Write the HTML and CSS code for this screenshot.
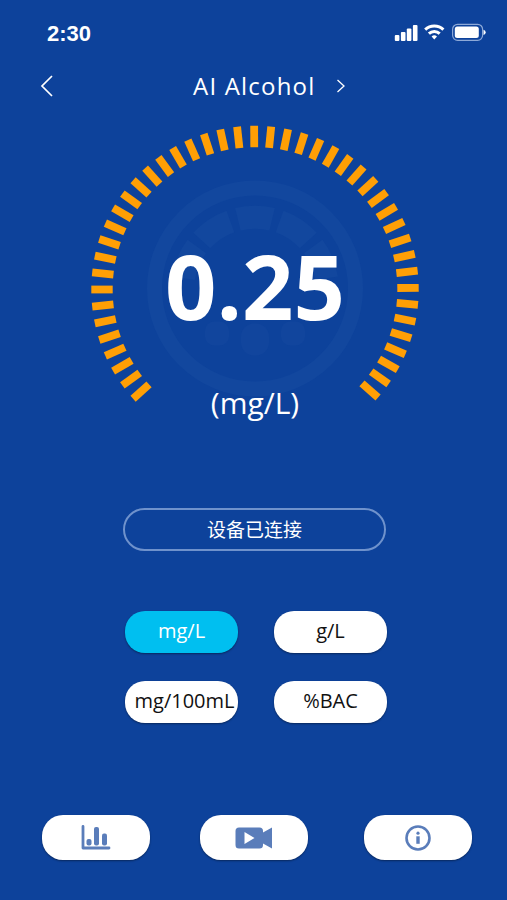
FILE: index.html
```
<!DOCTYPE html>
<html lang="zh-CN">
<head>
    <meta charset="UTF-8">
    <meta name="viewport" content="width=device-width, initial-scale=1.0">
    <title>AI Alcohol</title>
    <link rel="stylesheet" href="styles.css">
</head>
<body>
    <div class="app">
        <div class="status-bar">
            <span class="time">2:30</span>
            <svg class="status-icons" width="92" height="20" viewBox="0 0 92 20">
                <g fill="#fff">
                    <rect x="0.8" y="12" width="4.6" height="6" rx="1"/>
                    <rect x="6.9" y="9" width="4.6" height="9" rx="1"/>
                    <rect x="12.8" y="5.5" width="4.6" height="12.5" rx="1"/>
                    <rect x="18.9" y="2" width="4.6" height="16" rx="1"/>
                </g>
                <g fill="none" stroke="#fff" stroke-width="3">
                    <path d="M31.2 6.6a13 13 0 0 1 18.2 0"/>
                    <path d="M34.9 10.7a7.8 7.8 0 0 1 10.8 0"/>
                </g>
                <path d="M37.6 13.6a4 4 0 0 1 5.4 0l-2.7 3z" fill="#fff"/>
                <rect x="58.6" y="1.3" width="30" height="16" rx="5" fill="none" stroke="#8da9d8" stroke-width="1.2"/>
                <rect x="60.8" y="3.5" width="24" height="11.6" rx="2.5" fill="#fff"/>
                <path d="M89.5 6.8q2.2 .8 2.2 2.6t-2.2 2.6z" fill="#fff"/>
            </svg>
        </div>

        <div class="nav">
            <svg class="back" width="14" height="24" viewBox="0 0 14 24">
                <path d="M13 2L3 12l10 10"/>
            </svg>
            <h1>AI Alcohol</h1>
            <svg class="next" width="10" height="16" viewBox="0 0 10 16">
                <path d="M1.5 2L8 8l-6.5 6"/>
            </svg>
        </div>

        <div class="gauge">
            <svg class="dial" width="330" height="330" viewBox="-165 -164.5 330 330">
                <g class="watermark">
                    <circle cy="-1" r="100.5" stroke-width="15"/>
                    <path d="M-71.5 -11.3A72.4 72.4 0 0 1 71.5 -11.3" stroke-width="23" pathLength="162" stroke-dasharray="27.5 6.125"/>
                </g>
                <g class="dots">
                    <rect x="-50" y="32" width="24" height="24" rx="9"/>
                    <rect x="-14" y="34" width="28" height="32" rx="13"/>
                    <rect x="26" y="32" width="24" height="24" rx="9"/>
                </g>
                <g id="ticks" class="ticks"></g>
            </svg>
            <div class="value">0.25</div>
            <div class="unit">(mg/L)</div>
        </div>

        <div class="device">设备已连接</div>

        <div class="units">
            <button class="active">mg/L</button>
            <button>g/L</button>
            <button class="long">mg/100mL</button>
            <button>%BAC</button>
        </div>

        <div class="tabs">
            <button>
                <svg width="30" height="26" viewBox="0 0 30 26">
                    <path d="M2 1.5V23h26" fill="none" stroke="#5a7dba" stroke-width="2.8" stroke-linecap="round" stroke-linejoin="round"/>
                    <rect x="5.5" y="14" width="5" height="6.5" rx="2"/>
                    <rect x="13" y="2" width="5" height="18.5" rx="2"/>
                    <rect x="21" y="8.5" width="5" height="12" rx="2"/>
                </svg>
            </button>
            <button>
                <svg width="38" height="22" viewBox="0 0 38 22">
                    <path fill-rule="evenodd" d="M4 .5h20.5q3.5 0 3.5 3.5v1.5L37 .5v21l-9-5v1.5q0 3.5-3.5 3.5H4Q.5 21.5 .5 18V4Q.5 .5 4 .5zM9.5 5v12l10-6z"/>
                </svg>
            </button>
            <button>
                <svg width="26" height="26" viewBox="0 0 26 26">
                    <circle cx="13" cy="13" r="11.5" fill="none" stroke="#5a7dba" stroke-width="2.6"/>
                    <circle cx="13" cy="8.2" r="1.6"/>
                    <path d="M11.3 11.3h3.4v7.5h-3.4z"/>
                </svg>
            </button>
        </div>
    </div>

    <script>
        // Draw the 45 ticks of the dial, about 6 degrees apart
        const ticks = document.getElementById('ticks');
        for (let i = -22; i <= 22; i++) {
            const tick = document.createElementNS('http://www.w3.org/2000/svg', 'rect');
            tick.setAttribute('x', -3.9);
            tick.setAttribute('y', -163.7);
            tick.setAttribute('width', 7.8);
            tick.setAttribute('height', 21.4);
            tick.setAttribute('transform', 'rotate(' + (i * 5.98 - 0.3) + ')');
            ticks.appendChild(tick);
        }
    </script>
</body>
</html>
```
FILE: styles.css
```
body {
    margin: 0;
    background-color: #0d429b;
    color: white;
    font-family: "Open Sans", "Noto Sans CJK SC", sans-serif;
}

.app {
    width: 507px;
    height: 900px;
    overflow: hidden;
}

.status-bar {
    display: flex;
    justify-content: space-between;
    padding: 23px 21px 0 47px;
    height: 37px;
}

.time {
    font-family: "Liberation Sans", Arial, sans-serif;
    font-size: 22px;
    font-weight: bold;
    line-height: 22px;
}

.nav {
    display: flex;
    align-items: center;
    height: 52px;
    padding-left: 39px;
}

.nav path {
    fill: none;
    stroke: white;
    stroke-width: 1.7;
}

.nav .next path {
    stroke-width: 1.3;
}

h1 {
    width: 122px;
    margin: 0 21px 0 140px;
    font-size: 24px;
    font-weight: normal;
    letter-spacing: 1.2px;
    line-height: 52px;
    white-space: nowrap;
}

.gauge {
    display: grid;
    width: 330px;
    height: 330px;
    margin: 13px 0 0 90px;
}

.dial,
.value,
.unit {
    grid-area: 1 / 1;
    text-align: center;
}

.watermark {
    fill: none;
    stroke: #12479e;
}

.dots {
    fill: #11459d;
}

.ticks {
    fill: #ff9f05;
}

.value {
    font-size: 90px;
    font-weight: bold;
    line-height: 321px;
}

.unit {
    align-self: end;
    margin-bottom: 32px;
    font-size: 30px;
    line-height: 40px;
}

.device {
    box-sizing: border-box;
    width: 263px;
    height: 43px;
    margin: 53px 0 0 123px;
    border: 2px solid #6f92cc;
    border-radius: 22px;
    font-size: 19px;
    line-height: 41px;
    text-align: center;
}

.units {
    display: grid;
    grid-template-columns: 113px 113px;
    gap: 28px 36px;
    margin: 60px 0 0 125px;
}

button {
    padding: 0;
    border: none;
    background-color: white;
    box-shadow: 0 1px 2px rgba(0, 0, 0, 0.4);
    cursor: pointer;
}

.units button {
    height: 42px;
    padding-bottom: 2px;
    border-radius: 20px;
    color: #111;
    font-family: inherit;
    font-size: 20px;
    line-height: 38px;
    white-space: nowrap;
}

.units .active {
    background-color: #00bff0;
    color: white;
}

.units .long {
    padding-left: 6px;
}

.tabs {
    display: flex;
    margin: 92px 0 0 42px;
}

.tabs button {
    display: flex;
    align-items: center;
    justify-content: center;
    width: 108px;
    height: 45px;
    margin-right: 50px;
    border-radius: 21px;
}

.tabs button:last-child {
    margin: 0 0 0 6px;
}

.tabs svg {
    fill: #5a7dba;
}
```
